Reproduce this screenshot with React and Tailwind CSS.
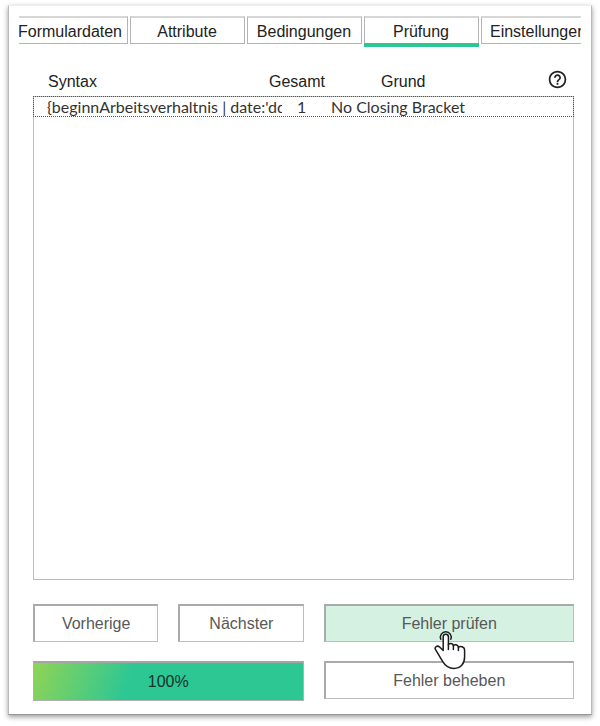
import { useState } from 'react'
import { MdHelpOutline } from 'react-icons/md'

const TABS = ['Formulardaten', 'Attribute', 'Bedingungen', 'Prüfung', 'Einstellungen']

const ERRORS = [
  { syntax: "{beginnArbeitsverhaltnis | date:'dd", total: 1, reason: 'No Closing Bracket' },
]

function HandPointer({ className }) {
  return (
    <svg viewBox="0 0 32 40" className={className} fill="none" stroke="#1c1c1c" strokeWidth="1.5" strokeLinecap="round" strokeLinejoin="round">
      <path d="M6.8 9.2 A5.4 5.4 0 1 1 16.8 9.2" />
      <path
        fill="white"
        d="M9.2 20.5 V6.8 A2.6 2.6 0 0 1 14.4 6.8 V14.8 C15.2 12.8 18.8 12.8 19.4 15.6 C20.6 14 24 14.4 24.4 17.2 C26 15.8 30.6 16.4 30.6 20.4 V27 C30.6 34 26.5 38.4 20 38.4 C14 38.4 11 35.6 8.6 31.4 L1.4 19.4 C0.2 17 3.4 15.2 5.4 16.8 Z"
      />
      <path d="M14.4 14.5 V19.4 M19.4 15.6 V19.6 M24.4 17.2 V20.6" />
    </svg>
  )
}

function ActionButton({ active, children }) {
  return (
    <button
      className={`relative h-[38px] border border-t-2 border-l-2 border-[#bdbdbd] border-t-[#aaa] border-l-[#aaa] text-base leading-6 text-[#585858] cursor-pointer ${
        active ? 'bg-[#d5f1e2]' : 'bg-white'
      }`}
    >
      {children}
    </button>
  )
}

export default function App() {
  const [tab, setTab] = useState('Prüfung')
  const progress = 100

  return (
    <div className="min-h-screen flex bg-white px-2 pt-[5px] pb-[11px] font-['Liberation_Sans',Arial,sans-serif] text-base leading-6 text-[#222]">
      <main className="flex-1 min-w-0 flex flex-col border border-t-[#eee] border-x-[#bbb] border-b-[#999] px-2.5 pt-2.5 pb-[13px] shadow-[0_2px_5px_rgba(0,0,0,0.4)]">
        {/* Tabs, cut off on both sides */}
        <nav className="flex justify-center gap-0.5 overflow-hidden pl-2">
          {TABS.map((name) => (
            <button
              key={name}
              onClick={() => setTab(name)}
              className={`w-[115px] h-[31px] shrink-0 cursor-pointer ${tab === name ? 'border-b-4 border-[#2dc794]' : 'pb-[3px]'}`}
            >
              <span
                className={`flex h-full items-center justify-center border-x border-t-2 border-t-[#d6d6d6] border-x-[#b4b4b4] pt-0.5 ${
                  tab === name ? '' : 'border-b border-b-[#b4b4b4]'
                }`}
              >
                {name}
              </span>
            </button>
          ))}
        </nav>

        <section className="flex-1 flex flex-col pl-3.5 pr-[7px] pt-5">
          <div className="flex-1 flex relative">
            <table className="flex-1 min-w-0 flex flex-col">
              <thead className="block">
                <tr className="flex h-[29px] items-center text-left">
                  <th className="w-[236px] pl-[15px] font-normal">Syntax</th>
                  <th className="w-28 font-normal">Gesamt</th>
                  <th className="font-normal">Grund</th>
                </tr>
              </thead>
              <tbody className="flex-1 block border border-[#bcbcbc]">
                {ERRORS.map((e) => (
                  <tr
                    key={e.syntax}
                    className="flex h-[21px] items-center -mx-px -mt-px border border-dotted border-[#555] font-['Lato','Open_Sans',sans-serif] text-base leading-5 text-[#333]"
                  >
                    <td className="w-[248px] pl-[13px] overflow-hidden whitespace-nowrap">{e.syntax}</td>
                    <td className="w-[49px] pl-[15px]">{e.total}</td>
                    <td>{e.reason}</td>
                  </tr>
                ))}
              </tbody>
            </table>
            <button aria-label="Hilfe" className="absolute right-1.5 top-0.5 cursor-pointer">
              <MdHelpOutline size={21} />
            </button>
          </div>

          <div className="grid grid-cols-[27fr_25fr] gap-x-5 gap-y-[19px] pt-6">
            <div className="grid grid-cols-2 gap-5">
              <ActionButton>Vorherige</ActionButton>
              <ActionButton>Nächster</ActionButton>
            </div>
            <ActionButton active>
              Fehler prüfen
              <HandPointer className="absolute z-10 left-[108px] top-6 w-8 h-10 pointer-events-none" />
            </ActionButton>
            <div
              role="progressbar"
              aria-label="Prüfung"
              aria-valuenow={progress}
              aria-valuemin={0}
              aria-valuemax={100}
              className="relative h-10 border border-t-2 border-[#b0b0b0] border-t-[#a5a5a5]"
            >
              <div
                className="h-full bg-[linear-gradient(110deg,#8fd455_0%,#2dc794_36%)]"
                style={{ width: `${progress}%` }}
              />
              <span className="absolute inset-0 flex items-center justify-center text-[#14332a]">{progress}%</span>
            </div>
            <ActionButton>Fehler beheben</ActionButton>
          </div>
        </section>
      </main>
    </div>
  )
}
